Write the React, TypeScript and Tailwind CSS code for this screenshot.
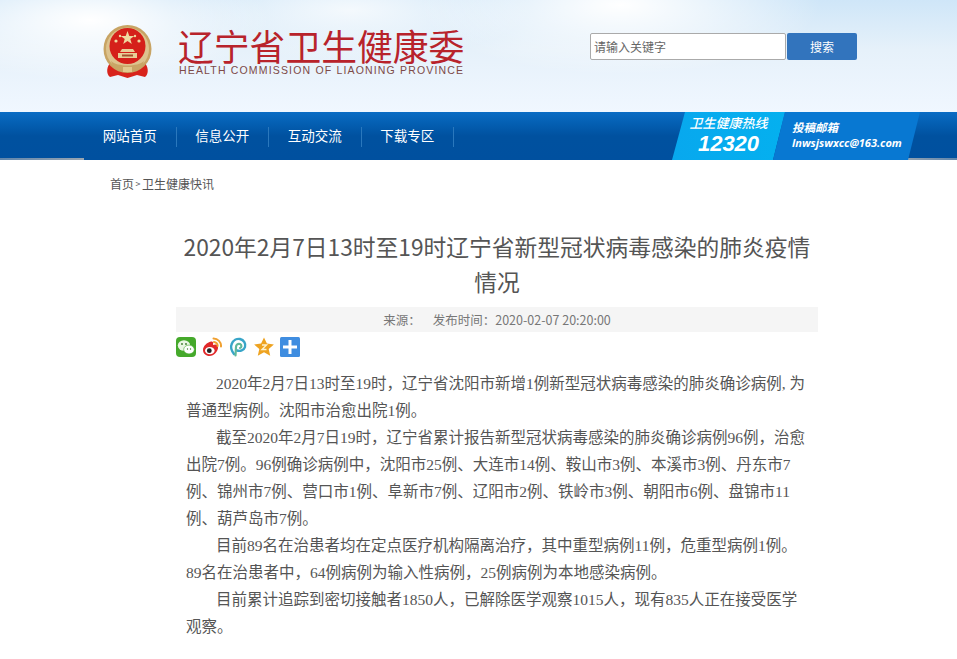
import React from 'react'

const navItems = ['网站首页', '信息公开', '互动交流', '下载专区']

const paragraphs = [
  '2020年2月7日13时至19时，辽宁省沈阳市新增1例新型冠状病毒感染的肺炎确诊病例, 为普通型病例。沈阳市治愈出院1例。',
  '截至2020年2月7日19时，辽宁省累计报告新型冠状病毒感染的肺炎确诊病例96例，治愈出院7例。96例确诊病例中，沈阳市25例、大连市14例、鞍山市3例、本溪市3例、丹东市7例、锦州市7例、营口市1例、阜新市7例、辽阳市2例、铁岭市3例、朝阳市6例、盘锦市11例、葫芦岛市7例。',
  '目前89名在治患者均在定点医疗机构隔离治疗，其中重型病例11例，危重型病例1例。89名在治患者中，64例病例为输入性病例，25例病例为本地感染病例。',
  '目前累计追踪到密切接触者1850人，已解除医学观察1015人，现有835人正在接受医学观察。',
]

const Emblem = () => (
  <svg width="49" height="53" viewBox="0 0 49 53" className="shrink-0">
    <path d="M9 36 C3 41 3 49 7 52 L15 50 L24.5 53 L34 50 L42 52 C46 49 46 41 40 36 Z" fill="#d8231b" />
    <ellipse cx="24.5" cy="24" rx="24" ry="24" fill="#c8a464" />
    <ellipse cx="24.5" cy="24" rx="21.5" ry="21.5" fill="#ddc38e" />
    <circle cx="24.5" cy="21" r="18" fill="#d5201a" />
    <path d="M24.5 6 l1.8 5 h5 l-4 3 1.5 5 -4.3 -3 -4.3 3 1.5 -5 -4 -3 h5 z" fill="#efd9a0" />
    <circle cx="13" cy="16" r="1.6" fill="#efd9a0" />
    <circle cx="36" cy="16" r="1.6" fill="#efd9a0" />
    <circle cx="17" cy="11" r="1.2" fill="#efd9a0" />
    <circle cx="32" cy="11" r="1.2" fill="#efd9a0" />
    <path d="M19 24 h11 l2 3 h-15 z M15 28 h19 v5 h-19 z" fill="#e8cf98" />
    <path d="M19 29.5 h11 v2 h-11 z" fill="#a5512f" />
    <path d="M8 36 C14 42 35 42 41 36 L39 42 C32 47 17 47 10 42 Z" fill="#c9a566" />
    <path d="M20 42 h9 v5 h-9 z" fill="#e2c98e" />
  </svg>
)

const ShareIcons = () => (
  <div className="flex gap-1.5 h-[22px] mt-[5px]">
    <svg width="20" height="20" viewBox="0 0 20 20">
      <rect width="20" height="20" rx="4" fill="#45a92b" />
      <ellipse cx="8" cy="8.5" rx="6.2" ry="5.2" fill="#eaf6e4" />
      <ellipse cx="13" cy="12.5" rx="5.3" ry="4.4" fill="#fff" stroke="#45a92b" strokeWidth=".6" />
      <circle cx="6" cy="7" r=".9" fill="#3a7a2a" />
      <circle cx="10" cy="7" r=".9" fill="#3a7a2a" />
      <circle cx="11.5" cy="12" r=".7" fill="#3a7a2a" />
      <circle cx="14.5" cy="12" r=".7" fill="#3a7a2a" />
    </svg>
    <svg width="20" height="20" viewBox="0 0 20 20">
      <path d="M1 13 C1 9 5 5.5 9 4.5 C11 4 11.5 6 11 8 C13 7 16 7.2 16 10 C16.5 14 12 19 7.5 19 C4 19 1 16.5 1 13 Z" fill="#e0282a" />
      <ellipse cx="7.8" cy="13.6" rx="4.8" ry="3.6" fill="#fff" />
      <circle cx="7.3" cy="13.7" r="2.4" fill="#222" />
      <path d="M11.5 1.5 a7.5 7.5 0 0 1 7.5 8 M12 5 a3.8 3.8 0 0 1 3.6 4" fill="none" stroke="#f0a030" strokeWidth="2" strokeLinecap="round" />
    </svg>
    <svg width="20" height="20" viewBox="0 0 20 20">
      <path d="M6 17 C3 13 2.5 10 3.5 7.5 C5 3 9 1.5 12 2 C16 3 18 6.5 17 10 C16 13.5 12 14.5 9 13.5" fill="none" stroke="#38a5c8" strokeWidth="2.4" strokeLinecap="round" />
      <path d="M7.5 18.5 L8 10 C8 7.5 10 6.5 12 7 C14 8 13.8 10.5 12 11" fill="none" stroke="#61b89a" strokeWidth="2.2" strokeLinecap="round" />
    </svg>
    <svg width="20" height="20" viewBox="0 0 20 20">
      <path d="M10 .5 l2.9 6.1 7 .8 -5.2 4.6 1.5 6.8 -6.2 -3.5 -6.2 3.5 1.5 -6.8 -5.2 -4.6 7 -.8 z" fill="#eea321" />
      <path d="M8 8 h4.5 l-4.5 4.5 h4.5" fill="none" stroke="#fdf2d0" strokeWidth="1.4" />
    </svg>
    <svg width="20" height="20" viewBox="0 0 20 20">
      <rect width="20" height="20" rx="1.5" fill="#3f8de0" />
      <path d="M8.5 3 h3 v5.5 h5.5 v3 h-5.5 v5.5 h-3 v-5.5 h-5.5 v-3 h5.5 z" fill="#fff" />
    </svg>
  </div>
)

export default function App() {
  return (
    <div className="min-h-[659px] bg-white overflow-hidden font-['Noto_Sans_CJK_SC',sans-serif]">
      <header className="h-[112px] bg-[radial-gradient(ellipse_200px_70px_at_620px_5px,#ffffff_0%,#ffffff00_100%),radial-gradient(ellipse_180px_60px_at_90px_20px,#ffffff_0%,#ffffff00_100%),radial-gradient(ellipse_180px_50px_at_350px_10px,#f4f9fd_0%,#f4f9fd00_100%),linear-gradient(to_bottom,#cfe6f8_0%,#e6f1fa_45%,#f0f7ff_100%)]">
        <div className="flex items-start pl-[103px] pt-[25px]">
          <Emblem />
          <div className="ml-[26px] w-[290px]">
            <div className="mt-[2px] text-[35.8px] leading-[36px] text-[#b8232b] whitespace-nowrap">辽宁省卫生健康委</div>
            <div className="mt-px pl-px text-[10.5px] leading-[12px] tracking-[1.17px] text-[#7d4a48] whitespace-nowrap font-['Liberation_Sans',sans-serif]">
              HEALTH COMMISSION OF LIAONING PROVINCE
            </div>
          </div>
          <div className="flex ml-[122px] mt-[8px]">
            <div className="w-[196px] h-[27px] bg-white border border-[#aaa] rounded-[2px] pl-[3px] text-xs leading-[25px] text-[#666]">
              请输入关键字
            </div>
            <button className="w-[70px] h-[27px] ml-px bg-[#3274bd] rounded-[2px] text-white text-xs">搜索</button>
          </div>
        </div>
      </header>
      <nav className="relative h-[48px] bg-gradient-to-b from-[#0a6cc4] via-[#00519f] to-[#00509f] flex items-center">
        <ul className="flex mt-[2px] pl-[84px] text-[13.5px] text-white">
          {navItems.map((item) => (
            <li key={item} className="w-[92.5px] h-[20px] leading-[16px] text-center border-r border-[#2a78bd]">
              {item}
            </li>
          ))}
        </ul>
        <span className="absolute left-0 bottom-0 h-[2px] w-[84px] bg-gradient-to-r from-[#5f86ad] to-[#9aa5b0]" />
        <span className="absolute right-0 bottom-0 h-[2px] w-[57px] bg-gradient-to-l from-[#5f86ad] to-[#9aa5b0]" />
        <div className="absolute left-[672px] top-0 h-[48px] w-[248px] flex text-white italic">
          <div className="w-[113px] h-[48px] bg-gradient-to-r from-[#08a8ee] to-[#04b0ef] [clip-path:polygon(13px_0,100%_0,calc(100%-12px)_100%,0_100%)] flex flex-col items-center pt-[3px]">
            <span className="text-[13px] leading-[16px] font-medium">卫生健康热线</span>
            <span className="text-[22px] leading-[26px] font-bold font-['Liberation_Sans',sans-serif]">12320</span>
          </div>
          <div className="w-[147px] h-[48px] -ml-[12px] bg-[#0878d2] [clip-path:polygon(12px_0,100%_0,calc(100%-12px)_100%,0_100%)] flex flex-col pl-[19px] pt-[8px]">
            <span className="text-[11.5px] leading-[15px] font-bold">投稿邮箱</span>
            <span className="text-[11px] leading-[15px] font-bold font-['Open_Sans',sans-serif]">lnwsjswxcc@163.com</span>
          </div>
        </div>
      </nav>
      <div className="flex items-center pl-[110px] pt-[16px] text-xs leading-[16px] text-[#555]">
        <span>首页</span>
        <span className="mx-[1.5px] text-[9px]">&gt;</span>
        <span>卫生健康快讯</span>
      </div>
      <main className="w-[642px] ml-[176px] mt-[37px]">
        <h1 className="text-[22.75px] leading-[35px] text-[#555] text-center">
          2020年2月7日13时至19时辽宁省新型冠状病毒感染的肺炎疫情情况
        </h1>
        <div className="h-[25px] mt-[8px] bg-[#f5f5f5] text-[12.5px] leading-[25px] text-[#777] flex justify-center gap-[12px]">
          <span>来源：</span>
          <span>发布时间：2020-02-07 20:20:00</span>
        </div>
        <ShareIcons />
        <div className="mt-[11px] ml-[10px] w-[619.5px] text-[15.5px] leading-[27px] text-[#555] font-['Liberation_Serif','Noto_Sans_CJK_SC',serif]">
          {paragraphs.map((p) => (
            <p key={p} className="indent-[30px]">
              {p}
            </p>
          ))}
        </div>
      </main>
    </div>
  )
}
